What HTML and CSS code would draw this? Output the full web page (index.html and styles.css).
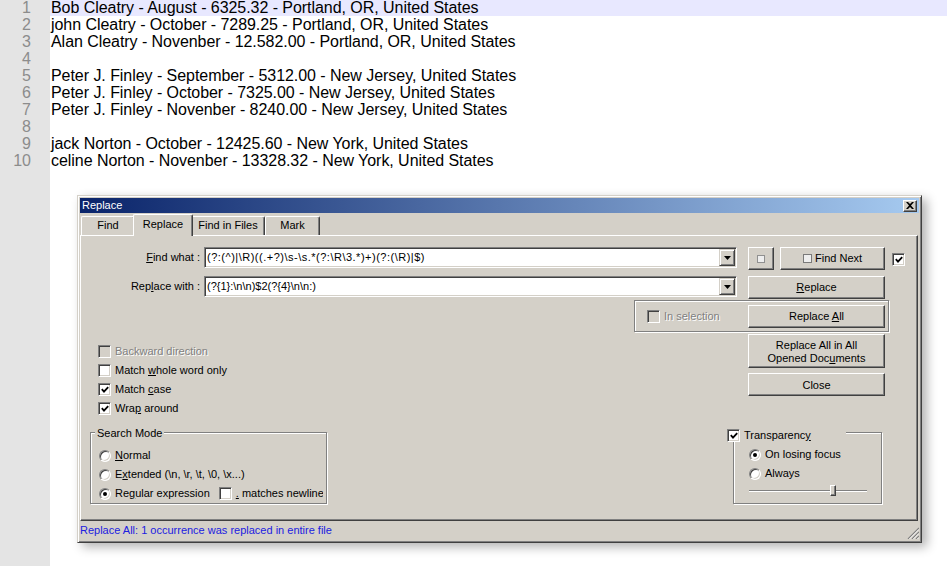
FILE: index.html
```html
<!DOCTYPE html>
<html lang="en">
<head>
  <meta charset="UTF-8" />
  <title>Replace</title>
  <link rel="stylesheet" href="styles.css">
</head>
<body>
  <div class="editor">
    <div class="gutter">
      <div>1</div><div>2</div><div>3</div><div>4</div><div>5</div>
      <div>6</div><div>7</div><div>8</div><div>9</div><div>10</div>
    </div>
    <div class="text">
      <div class="line current">Bob Cleatry - August - 6325.32 - Portland, OR, United States</div>
      <div class="line">john Cleatry - October - 7289.25 - Portland, OR, United States</div>
      <div class="line">Alan Cleatry - Novenber - 12.582.00 - Portland, OR, United States</div>
      <div class="line">&nbsp;</div>
      <div class="line">Peter J. Finley - September - 5312.00 - New Jersey, United States</div>
      <div class="line">Peter J. Finley - October - 7325.00 - New Jersey, United States</div>
      <div class="line">Peter J. Finley - Novenber - 8240.00 - New Jersey, United States</div>
      <div class="line">&nbsp;</div>
      <div class="line">jack Norton - October - 12425.60 - New York, United States</div>
      <div class="line">celine Norton - Novenber - 13328.32 - New York, United States</div>
    </div>
  </div>

  <div class="dialog">
    <div class="titlebar">
      <span>Replace</span>
      <span class="title-close">
        <svg width="8" height="7" viewBox="0 0 8 7"><path d="M0 0h2l2 2 2-2h2L5 3.5 8 7H6L4 5 2 7H0l3-3.5z"/></svg>
      </span>
    </div>

    <div class="tabs">
      <div class="tab tab-find">Find</div>
      <div class="tab tab-active">Replace</div>
      <div class="tab tab-files">Find in Files</div>
      <div class="tab tab-mark">Mark</div>
    </div>

    <div class="panel">
      <div class="top">
        <div class="left-col">
          <div class="form">
            <label><u>F</u>ind what :</label>
            <div class="combo">
              <span class="regex">(?:(^)|\R)((.+?)\s-\s.*(?:\R\3.*)+)(?:(\R)|$)</span>
              <span class="drop"><svg width="7" height="4" viewBox="0 0 7 4"><path d="M0 0h7L3.5 4z"/></svg></span>
            </div>
            <label>Rep<u>l</u>ace with :</label>
            <div class="combo">
              <span>(?{1}:\n\n)$2(?{4}\n\n:)</span>
              <span class="drop"><svg width="7" height="4" viewBox="0 0 7 4"><path d="M0 0h7L3.5 4z"/></svg></span>
            </div>
          </div>

          <div class="checks">
            <div class="check disabled"><span class="box"></span><span>Backward direction</span></div>
            <div class="check"><span class="box"></span><span>Match <u>w</u>hole word only</span></div>
            <div class="check"><span class="box"><svg width="8" height="8" viewBox="0 0 8 8"><path d="M0.8 3.2 3 5.6 7.2 1.2" fill="none" stroke="#000" stroke-width="1.8"/></svg></span><span>Match <u>c</u>ase</span></div>
            <div class="check"><span class="box"><svg width="8" height="8" viewBox="0 0 8 8"><path d="M0.8 3.2 3 5.6 7.2 1.2" fill="none" stroke="#000" stroke-width="1.8"/></svg></span><span>Wra<u>p</u> around</span></div>
          </div>
        </div>

        <div class="right-col">
          <div class="btn-row">
            <button class="btn btn-sq"><span class="sq"></span></button>
            <button class="btn btn-next"><span class="sq"></span> Find Next</button>
          </div>
          <button class="btn btn-replace"><u>R</u>eplace</button>
          <div class="sel-group">
            <div class="check disabled"><span class="box"></span><span>In selection</span></div>
            <button class="btn">Replace <u>A</u>ll</button>
          </div>
          <button class="btn btn-tall">Replace All in All<br>Opened Doc<u>u</u>ments</button>
          <button class="btn btn-close">Close</button>
        </div>

        <div class="side-col">
          <span class="box"><svg width="8" height="8" viewBox="0 0 8 8"><path d="M0.8 3.2 3 5.6 7.2 1.2" fill="none" stroke="#000" stroke-width="1.8"/></svg></span>
        </div>
      </div>

      <div class="bottom">
        <div class="group search-mode">
          <div class="legend">Search Mode</div>
          <div class="radios">
            <div class="radio"><span class="dot"></span><span><u>N</u>ormal</span></div>
            <div class="radio"><span class="dot"></span><span>E<u>x</u>tended (\n, \r, \t, \0, \x...)</span></div>
            <div class="radio">
              <span class="dot on"></span><span>Re<u>g</u>ular expression</span>
              <span class="box newline-box"></span><span><u>.</u> matches newline</span>
            </div>
          </div>
        </div>

        <div class="group transparency">
          <div class="legend legend-check">
            <span class="box"><svg width="8" height="8" viewBox="0 0 8 8"><path d="M0.8 3.2 3 5.6 7.2 1.2" fill="none" stroke="#000" stroke-width="1.8"/></svg></span>
            <span>Transparenc<u>y</u></span>
          </div>
          <div class="radios">
            <div class="radio"><span class="dot on"></span><span>On losing focus</span></div>
            <div class="radio"><span class="dot"></span><span>Always</span></div>
          </div>
          <div class="slider"><span class="thumb"></span></div>
        </div>
      </div>
    </div>

    <div class="status">
      <span>Replace All: 1 occurrence was replaced in entire file</span>
      <svg class="grip" width="12" height="12" viewBox="0 0 12 12">
        <path d="M12 1 1 12M12 5 5 12M12 9 9 12" stroke="#808080" stroke-width="1.2"/>
        <path d="M12 2.4 2.4 12M12 6.4 6.4 12M12 10.4 10.4 12" stroke="#fff" stroke-width="0.9"/>
      </svg>
    </div>
  </div>
</body>
</html>
```

FILE: styles.css
```css
body {
  margin: 0;
  font-family: "Liberation Sans", Arial, sans-serif;
  background: #fff;
  overflow: hidden;
}

/* editor behind the dialog */
.editor {
  display: flex;
  height: 567px;
  margin-top: -1px;
  font-size: 16px;
  line-height: 17px;
}
.gutter {
  width: 50px;
  flex: none;
  box-sizing: border-box;
  padding-right: 19px;
  background: #e4e4e4;
  color: #8c8c8c;
  text-align: right;
}
.text {
  flex: 1;
  color: #000;
}
.line {
  padding-left: 1px;
  white-space: nowrap;
  letter-spacing: -0.05px;
}
.line.current {
  background: #e8e8ff;
}

/* dialog window */
.dialog {
  position: absolute;
  left: 77px;
  top: 195px;
  width: 845px;
  height: 348px;
  box-sizing: border-box;
  padding: 2px;
  background: #d4d0c8;
  border: 1px solid;
  border-color: #d4d0c8 #404040 #404040 #d4d0c8;
  box-shadow: inset 1px 1px #fff, inset -1px -1px #808080, 5px 4px 10px rgba(0,0,0,0.3);
  font: 11px/13px "Liberation Sans", Arial, sans-serif;
  color: #000;
  display: flex;
  flex-direction: column;
}
.titlebar {
  height: 15px;
  flex: none;
  padding: 0 2px;
  display: flex;
  align-items: center;
  justify-content: space-between;
  background: linear-gradient(to right, #0a246a, #a6caf0);
  color: #fff;
}
.title-close {
  width: 14px;
  height: 12px;
  box-sizing: border-box;
  border: 1px solid;
  border-color: #fff #404040 #404040 #fff;
  box-shadow: inset -1px -1px #808080;
  background: #d4d0c8;
  display: flex;
  align-items: center;
  justify-content: center;
}

/* tabs */
.tabs {
  height: 21px;
  flex: none;
  margin-top: 1px;
  padding-left: 1px;
  display: flex;
  align-items: flex-end;
  position: relative;
  z-index: 1;
}
.tab {
  height: 19px;
  box-sizing: border-box;
  border: 1px solid;
  border-bottom: none;
  border-color: #fff #404040 #404040 #fff;
  border-radius: 2px 2px 0 0;
  box-shadow: inset -1px 0 #808080;
  background: #d4d0c8;
  text-align: center;
  line-height: 16px;
}
.tab-find { width: 54px; }
.tab-active {
  width: 60px;
  height: 22px;
  margin: 0 -2px -1px;
  line-height: 19px;
  position: relative;
  z-index: 2;
}
.tab-files { width: 74px; }
.tab-mark { width: 55px; }

.panel {
  width: 838px;
  height: 286px;
  flex: none;
  box-sizing: border-box;
  border: 1px solid;
  border-color: #fff #404040 #404040 #fff;
  box-shadow: inset -1px -1px #808080;
}

.top {
  display: flex;
  align-items: flex-start;
  padding-top: 11px;
}
.left-col {
  width: 656px;
  flex: none;
}
.form {
  display: grid;
  grid-template-columns: 123px 533px;
  row-gap: 8px;
  align-items: center;
}
.form label {
  text-align: right;
  padding-right: 4px;
}
.combo {
  height: 21px;
  box-sizing: border-box;
  padding: 1px 1px 1px 2px;
  border: 1px solid;
  border-color: #808080 #fff #fff #808080;
  box-shadow: inset 1px 1px #404040, inset -1px -1px #d4d0c8;
  background: #fff;
  display: flex;
  align-items: center;
  white-space: nowrap;
}
.regex {
  letter-spacing: 0.5px;
}
.drop {
  margin-left: auto;
  width: 16px;
  height: 17px;
  flex: none;
  box-sizing: border-box;
  border: 1px solid;
  border-color: #d4d0c8 #404040 #404040 #d4d0c8;
  box-shadow: inset 1px 1px #fff, inset -1px -1px #808080;
  background: #d4d0c8;
  display: flex;
  align-items: center;
  justify-content: center;
}

.checks {
  margin: 45px 0 0 17px;
}
.check {
  display: flex;
  align-items: center;
  gap: 4px;
  height: 19px;
  white-space: nowrap;
}
.box {
  width: 13px;
  height: 13px;
  flex: none;
  box-sizing: border-box;
  border: 1px solid;
  border-color: #808080 #fff #fff #808080;
  box-shadow: inset 1px 1px #404040, inset -1px -1px #d4d0c8;
  background: #fff;
  display: flex;
  align-items: center;
  justify-content: center;
}
.disabled {
  color: #808080;
  text-shadow: 1px 1px #fff;
}
.disabled .box {
  background: #d4d0c8;
}

.right-col {
  width: 137px;
  flex: none;
  margin-left: 11px;
  display: flex;
  flex-direction: column;
}
.btn {
  width: 100%;
  height: 23px;
  box-sizing: border-box;
  padding: 0;
  border: 1px solid;
  border-color: #fff #404040 #404040 #fff;
  box-shadow: inset -1px -1px #808080;
  background: #d4d0c8;
  font: inherit;
  color: #000;
  text-align: center;
}
.btn-row {
  display: flex;
  gap: 6px;
}
.btn-sq { width: 26px; flex: none; }
.btn-next { flex: 1; }
.sq {
  display: inline-block;
  width: 9px;
  height: 9px;
  box-sizing: border-box;
  border: 1px solid #7a7a7a;
  background: #eeeeee;
  vertical-align: -1px;
}
.btn-sq .sq {
  width: 8px;
  height: 8px;
  border-color: #909090;
}
.btn-replace { margin-top: 6px; }
.sel-group {
  width: 255px;
  height: 32px;
  margin: 1px 0 0 -114px;
  box-sizing: border-box;
  padding: 0 3px 0 12px;
  border: 1px solid #808080;
  box-shadow: inset 1px 1px #fff, 1px 1px #fff;
  display: flex;
  align-items: center;
}
.sel-group .btn {
  width: 137px;
  margin-left: auto;
}
.btn-tall {
  height: 34px;
  margin-top: 2px;
  padding-top: 1px;
}
.btn-close {
  margin-top: 5px;
  padding-top: 1px;
}

.side-col {
  margin-left: 7px;
  padding-top: 6px;
}

/* group boxes */
.bottom {
  display: flex;
  align-items: flex-start;
  margin-top: 14px;
}
.group {
  height: 72px;
  box-sizing: border-box;
  border: 1px solid #808080;
  box-shadow: inset 1px 1px #fff, 1px 1px #fff;
}
.legend {
  width: max-content;
  height: 13px;
  margin: -6px 0 0 -4px;
  padding: 0 2px;
  background: #d4d0c8;
}
.search-mode {
  width: 237px;
  margin-left: 9px;
  padding: 0 3px 0 8px;
}
.radios {
  margin-top: 6px;
  overflow: hidden;
}
.radio {
  display: flex;
  align-items: center;
  gap: 4px;
  height: 19px;
  white-space: nowrap;
}
.dot {
  width: 12px;
  height: 12px;
  flex: none;
  box-sizing: border-box;
  border-radius: 50%;
  border: 1px solid;
  border-color: #808080 #fff #fff #808080;
  box-shadow: inset 1px 1px #404040, inset -1px -1px #d4d0c8;
  background: #fff;
  display: flex;
  align-items: center;
  justify-content: center;
}
.dot.on::after {
  content: "";
  width: 4px;
  height: 4px;
  border-radius: 50%;
  background: #000;
}
.newline-box {
  margin-left: 5px;
}

.transparency {
  width: 149px;
  margin: 0 35px 0 auto;
  padding-left: 15px;
}
.legend-check {
  width: 119px;
  margin: -4px 0 0 -22px;
  padding: 0;
  display: flex;
  align-items: center;
  gap: 4px;
}
.transparency .radios {
  margin-top: 3px;
}
.slider {
  width: 118px;
  height: 12px;
  margin-top: 2px;
  background: linear-gradient(to bottom, transparent 5px, #808080 5px, #808080 6px, #fff 6px, #fff 7px, transparent 7px);
}
.thumb {
  display: block;
  width: 6px;
  height: 11px;
  margin-left: 81px;
  box-sizing: border-box;
  border: 1px solid;
  border-color: #fff #404040 #404040 #fff;
  box-shadow: inset -1px -1px #808080;
  background: #d4d0c8;
}

.status {
  flex: 1;
  display: flex;
  align-items: center;
  justify-content: space-between;
  color: #2020e0;
}
.grip {
  align-self: flex-end;
  margin-bottom: 1px;
}
```
